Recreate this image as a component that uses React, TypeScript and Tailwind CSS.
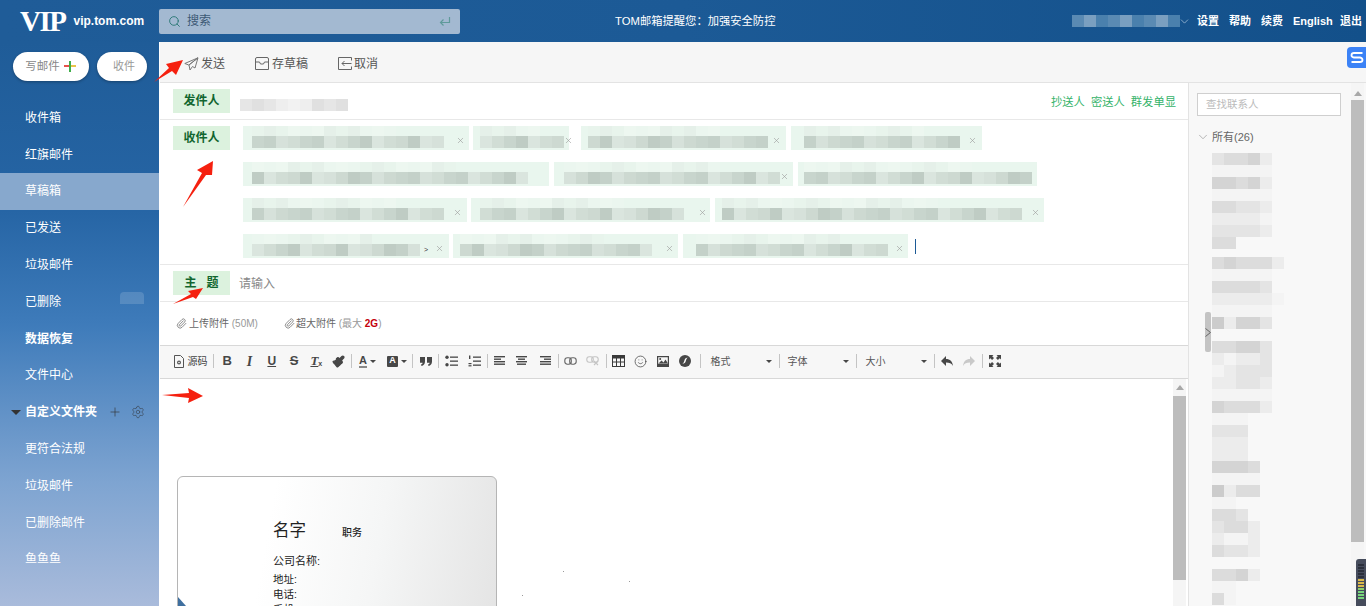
import React from "react"
import { ChevronDown, Plus, Search, Settings, Paperclip, Smile, Paintbrush, X } from "lucide-react"

const navTop = ["收件箱", "红旗邮件", "草稿箱", "已发送", "垃圾邮件", "已删除", "数据恢复", "文件中心"]
const navBottom = ["更符合法规", "垃圾邮件", "已删除邮件", "鱼鱼鱼"]

const greens = ["#c8d5cd", "#d1ddd5", "#dae5de", "#bfccc4", "#cdd9d1", "#d6e1da", "#c4d1c9"]
const lights = ["#e8f4ec", "#ebf6ef", "#e5f0e9", "#edf7f0"]
const greys = ["transparent", "#f4f4f4", "#ececec", "#e4e4e4", "#dcdcdc", "#d4d4d4", "#cccccc"]

// address chips, each one is blurred out in the screenshot
type Chip = { w: number; pad: number; cells: number; close?: number; gap?: number; mark?: boolean }
const chipRows: Chip[][] = [
  [
    { w: 226, pad: 9, cells: 16, close: 4 },
    { w: 96, pad: 7, cells: 7, close: 4, gap: 4 },
    { w: 205, pad: 7, cells: 15, close: 5, gap: 12 },
    { w: 191, pad: 13, cells: 13, close: 5, gap: 5 },
  ],
  [
    { w: 306, pad: 9, cells: 23 },
    { w: 239, pad: 10, cells: 18, close: 5, gap: 5 },
    { w: 239, pad: 6, cells: 19, gap: 5 },
  ],
  [
    { w: 224, pad: 9, cells: 16, close: 5 },
    { w: 239, pad: 9, cells: 17, close: 3, gap: 4 },
    { w: 329, pad: 7, cells: 25, close: 4, gap: 5 },
  ],
  [
    { w: 206, pad: 9, cells: 14, close: 5, mark: true },
    { w: 225, pad: 7, cells: 16, close: 4, gap: 4 },
    { w: 225, pad: 13, cells: 16, close: 4, gap: 5 },
  ],
]

const contactRows = [
  "34452", "11111", "55452", "11111", "44332", "22221", "33332", "44", "-",
  "454442", "11111", "44443", "222221", "11111", "62553", "", "44553", "21223", "12333", "22332", "11111",
  "54442", "111", "333", "222", "222", "5554", "1111", "6244", "11", "443", "3442", "2112", "4332", "", "4452", "11", "41",
]

function Cells({ count, seed, palette, h }: { count: number; seed: number; palette: string[]; h: string }) {
  return (
    <div className="flex">
      {Array.from({ length: count }).map((_, i) => (
        <div key={i} className={`w-3 ${h}`} style={{ background: palette[(i * 5 + seed + (i % 3)) % palette.length] }} />
      ))}
    </div>
  )
}

function AddressChip({ chip, seed }: { chip: Chip; seed: number }) {
  return (
    <div
      className="flex h-6 shrink-0 items-end bg-[#e9f6ee] pb-[2px]"
      style={{ width: chip.w, marginLeft: chip.gap ?? 0, paddingLeft: chip.pad }}
    >
      <div className="flex flex-col">
        <Cells count={Math.ceil(chip.cells * 0.7)} seed={seed} palette={lights} h="h-[10px]" />
        <Cells count={chip.cells} seed={seed} palette={greens} h="h-3" />
      </div>
      {chip.mark && <span className="mb-[2px] ml-[4px] text-[7px] leading-[9px] text-[#333]">&gt;</span>}
      {chip.close !== undefined && (
        <span className="mb-[3px] ml-auto" style={{ marginRight: chip.close }}>
          <X size={9} strokeWidth={1.6} className="text-[#9a9a9a]" />
        </span>
      )}
    </div>
  )
}

function FieldLabel({ children }: { children: React.ReactNode }) {
  return (
    <div className="flex h-6 w-[57px] shrink-0 items-center justify-center bg-[#dcf2de] text-[12px] font-bold text-[#11662f]">
      {children}
    </div>
  )
}

function Sep({ className = "" }: { className?: string }) {
  return <div className={`h-[14px] w-px shrink-0 bg-[#c4c4c4] ${className}`} />
}

function Tool({ children, w = "w-[22.3px]" }: { children: React.ReactNode; w?: string }) {
  return <div className={`flex h-5 shrink-0 items-center justify-center text-[#474747] ${w}`}>{children}</div>
}

function Caret() {
  return <div className="ml-[3px] h-0 w-0 border-x-[3px] border-t-[3px] border-x-transparent border-t-[#474747]" />
}

function Lines({ rows }: { rows: [number, number][] }) {
  return (
    <svg width="12" height="12" viewBox="0 0 12 12" fill="#474747">
      {rows.map(([x, w], i) => (
        <rect key={i} x={x} y={1 + i * 2.5} width={w} height="1.4" />
      ))}
    </svg>
  )
}

function ListIcon({ numbered }: { numbered?: boolean }) {
  return (
    <svg width="13" height="12" viewBox="0 0 13 12" fill="#474747">
      <rect x="5" y="1.5" width="8" height="1.3" />
      <rect x="5" y="5.5" width="8" height="1.3" />
      <rect x="5" y="9.5" width="8" height="1.3" />
      {numbered ? (
        <>
          <rect x="1" y="0.5" width="1.4" height="3.5" />
          <rect x="0.5" y="8" width="3" height="1.2" />
          <rect x="0.5" y="10.2" width="3" height="1.2" />
        </>
      ) : (
        <>
          <circle cx="2" cy="2.2" r="1.7" />
          <circle cx="2" cy="9.8" r="1.7" />
        </>
      )}
    </svg>
  )
}

function SelectBox({ label, className }: { label: string; className: string }) {
  return (
    <div className={`flex h-5 shrink-0 items-center justify-between pr-[7px] text-[10px] text-[#555] ${className}`}>
      <span>{label}</span>
      <div className="h-0 w-0 border-x-[3px] border-t-[3px] border-x-transparent border-t-[#474747]" />
    </div>
  )
}

function EditorToolbar() {
  return (
    <div className="flex h-[34px] shrink-0 items-center border-y border-[#d8d8d8] bg-[#f7f7f7] pb-[2px] pl-[10px]">
      <Tool w="w-[40px]">
        <svg width="12" height="13" viewBox="0 0 12 13" fill="none" stroke="#555" strokeWidth="1">
          <path d="M1.5.5h6l3 3v9h-9z" />
          <circle cx="6" cy="7.5" r="2" fill="#555" stroke="none" />
          <circle cx="6" cy="7.5" r="0.8" fill="#fff" stroke="none" />
        </svg>
        <span className="ml-[3px] text-[10px] text-[#444]">源码</span>
      </Tool>
      <Sep className="ml-[3px] mr-[2px]" />
      <Tool><span className="font-['Liberation_Sans'] text-[13px] font-bold">B</span></Tool>
      <Tool><span className="font-['Liberation_Serif'] text-[14px] font-bold italic">I</span></Tool>
      <Tool><span className="font-['Liberation_Sans'] text-[12px] font-bold underline">U</span></Tool>
      <Tool><span className="font-['Liberation_Sans'] text-[13px] font-bold line-through">S</span></Tool>
      <Tool>
        <span className="font-['Liberation_Serif'] text-[13px] font-bold italic underline">T</span>
        <span className="mt-[5px] text-[7px] font-bold leading-none">x</span>
      </Tool>
      <Tool><Paintbrush size={13} strokeWidth={2.4} fill="#474747" /></Tool>
      <Sep className="ml-[1px] mr-[1px]" />
      <Tool w="w-[29.5px]">
        <span className="border-b-2 border-[#888] font-['Liberation_Sans'] text-[11px] font-bold leading-[11px]">A</span>
        <Caret />
      </Tool>
      <Tool w="w-[29.5px]">
        <span className="flex h-[11px] w-[11px] items-center justify-center rounded-[1px] bg-[#474747] font-['Liberation_Sans'] text-[9px] font-bold text-white">A</span>
        <Caret />
      </Tool>
      <Sep className="mx-[0.5px]" />
      <Tool w="w-[24px]">
        <svg width="12" height="9" viewBox="0 0 12 9" fill="#474747">
          <path d="M0 0h5v4.5C5 7 3.5 8.5 1.5 9L1 7.6c1-.3 1.5-1 1.6-1.9H0zM7 0h5v4.5C12 7 10.5 8.5 8.5 9L8 7.6c1-.3 1.5-1 1.6-1.9H7z" />
        </svg>
      </Tool>
      <Sep className="mx-[0.5px]" />
      <div className="w-px shrink-0" />
      <Tool><ListIcon /></Tool>
      <Tool><ListIcon numbered /></Tool>
      <Sep className="ml-[2px] mr-[0.5px]" />
      <Tool><Lines rows={[[0, 11], [0, 7], [0, 11], [0, 11]]} /></Tool>
      <Tool><Lines rows={[[0, 11], [2, 7], [0, 11], [1, 9]]} /></Tool>
      <Tool><Lines rows={[[1, 11], [5, 7], [1, 11], [1, 11]]} /></Tool>
      <Sep className="ml-[2px] mr-[0.5px]" />
      <Tool>
        <svg width="13" height="8" viewBox="0 0 13 8" fill="none" stroke="#666" strokeWidth="1.1">
          <rect x="0.8" y="0.8" width="6.5" height="6.4" rx="2.6" />
          <rect x="5.7" y="0.8" width="6.5" height="6.4" rx="2.6" />
        </svg>
      </Tool>
      <Tool>
        <svg width="13" height="10" viewBox="0 0 13 10" fill="none" stroke="#c4c4c4" strokeWidth="1.1">
          <rect x="0.8" y="0.8" width="6.5" height="5.4" rx="2.4" />
          <rect x="5.7" y="0.8" width="6.5" height="5.4" rx="2.4" />
          <path d="M8 5l4 4M12 5L8 9" />
        </svg>
      </Tool>
      <Sep className="ml-[2px] mr-[0.5px]" />
      <Tool>
        <svg width="13" height="12" viewBox="0 0 13 12" fill="none" stroke="#3a3a3a" strokeWidth="1">
          <rect x="0.5" y="0.5" width="12" height="11" />
          <rect x="0.5" y="0.5" width="12" height="2.5" fill="#3a3a3a" />
          <path d="M4.5 3v8.5M8.5 3v8.5M.5 7h12" />
        </svg>
      </Tool>
      <Tool><Smile size={13} strokeWidth={1.4} /></Tool>
      <Tool>
        <svg width="12" height="11" viewBox="0 0 12 11" fill="#474747">
          <path fillRule="evenodd" d="M0 0h12v11H0zM1.2 1.2v6.6h9.6V1.2z" />
          <path d="M1.5 7.5l3-3 2 2 2-3 2.5 4z" />
          <circle cx="3.2" cy="3" r="1" />
        </svg>
      </Tool>
      <Tool>
        <svg width="12" height="12" viewBox="0 0 12 12">
          <circle cx="6" cy="6" r="6" fill="#474747" />
          <path d="M8.7 2.6C6.5 3 5.8 4.2 5.4 5.5 5 7 4.5 8 3.3 8.8 5.4 8.8 6.3 7.5 6.7 6.2 7.1 5 7.5 3.6 8.7 2.6z" fill="#fff" />
        </svg>
      </Tool>
      <Sep className="ml-[3px]" />
      <SelectBox label="格式" className="w-[78px] pl-[10px]" />
      <Sep className="mr-[1px]" />
      <SelectBox label="字体" className="w-[75px] pl-[7px]" />
      <Sep className="mr-[1px]" />
      <SelectBox label="大小" className="w-[76px] pl-[8px]" />
      <Sep className="mr-[1px]" />
      <Tool>
        <svg width="12" height="10" viewBox="0 0 12 10" fill="#474747"><path d="M5 0v3c4 0 6.5 2.5 7 7-1.500-2.500-3.500-3.400-7-3.400V10L0 5z" /></svg>
      </Tool>
      <Tool>
        <svg width="12" height="10" viewBox="0 0 12 10" fill="#c9c9c9"><path d="M7 0v3C3 3 .5 5.500 0 10c1.500-2.500 3.500-3.400 7-3.400V10l5-5z" /></svg>
      </Tool>
      <Sep className="ml-[2px] mr-[1px]" />
      <Tool>
        <svg width="12" height="12" viewBox="0 0 12 12" fill="#474747">
          <path d="M0 0h4.500L3.200 1.300 5 3.100 3.100 5 1.300 3.200 0 4.500zM12 0v4.500l-1.300-1.300L8.900 5 7 3.100l1.800-1.800L7.500 0zM0 12V7.500l1.300 1.300L3.100 7 5 8.900l-1.800 1.800L4.500 12zM12 12H7.500l1.300-1.300L7 8.900 8.900 7l1.800 1.800L12 7.500z" />
        </svg>
      </Tool>
    </div>
  )
}

function Scrollbar({ className, thumb, top }: { className: string; thumb: string; top: string }) {
  return (
    <div className={`flex w-[13px] shrink-0 flex-col items-center bg-[#f5f5f5] ${className}`}>
      <div className={`h-0 w-0 border-x-[4px] border-b-[5px] border-x-transparent border-b-[#a8a8a8] ${top}`} />
      <div className={`w-full bg-[#bdbdbd] ${thumb}`} />
    </div>
  )
}

export default function App() {
  return (
    <div className="relative flex h-[606px] w-[1366px] flex-col overflow-hidden bg-white font-['Liberation_Sans','Noto_Sans_CJK_SC',sans-serif] text-[12px]">
      <header className="flex h-[42px] shrink-0 items-center bg-[linear-gradient(90deg,#1f5c98_0%,#1c5a96_50%,#13508a_100%)] text-white">
        <div className="flex w-[159px] shrink-0 items-center pl-[20px]">
          <span className="font-['Liberation_Serif'] text-[29px] font-bold leading-none tracking-[-1.5px]">VIP</span>
          <span className="ml-[8px] text-[12px] font-bold">vip.tom.com</span>
        </div>
        <div className="flex h-[25px] w-[301px] shrink-0 items-center justify-between rounded-[2px] bg-[#a3b9d1] px-[9px]">
          <div className="flex items-center gap-[6px] text-[#3d5a75]">
            <Search size={13} strokeWidth={1.8} className="text-[#2f7a78]" />
            <span>搜索</span>
          </div>
          <svg width="12" height="11" viewBox="0 0 12 11" fill="none" stroke="#5f9a9a" strokeWidth="1.2">
            <path d="M10.5 1v5.5H1.5M4.5 3.5l-3 3 3 3" />
          </svg>
        </div>
        <span className="ml-[155px] w-[290px] shrink-0 text-[11.3px]">TOM邮箱提醒您：加强安全防控</span>
        <div className="ml-[167px] flex h-[12px] shrink-0 items-center">
          <Cells count={9} seed={2} palette={["#2b6a9e", "#3d78aa", "#5a8ab3", "#7a9fc0", "#4a80ad"]} h="h-[12px]" />
          <ChevronDown size={13} strokeWidth={1.4} className="ml-[-2px] text-[#a9c2da]" />
        </div>
        <nav className="ml-[6px] flex text-[11px] font-bold">
          <span className="w-[32px]">设置</span>
          <span className="w-[32px]">帮助</span>
          <span className="w-[32px]">续费</span>
          <span className="w-[47px]">English</span>
          <span>退出</span>
        </nav>
      </header>

      <div className="flex min-h-0 flex-1">
        <aside className="relative w-[159px] shrink-0 bg-[linear-gradient(180deg,#1f5c98_0%,#2665a5_30%,#3e7bba_50%,#7ea4d1_78%,#a9bbdb_100%)] text-[12px] text-white">
          <div className="flex gap-[8px] pl-[13px] pt-[10px]">
            <div className="flex h-[29px] w-[76px] items-center justify-center rounded-full bg-white pr-[1px] text-[11.5px] text-[#888] shadow-[0_1px_3px_rgba(0,0,0,0.3)]">
              写邮件
              <span className="relative ml-[4px] h-[11px] w-[12px]">
                <span className="absolute left-0 top-[4px] h-[2px] w-[6px] bg-[#e8524a]" />
                <span className="absolute right-0 top-[4px] h-[2px] w-[6px] bg-[#e9c349]" />
                <span className="absolute left-[5px] top-0 h-[11px] w-[2px] bg-[#3fae49]" />
              </span>
            </div>
            <div className="flex h-[29px] w-[50px] items-center justify-center rounded-full bg-white pl-[4px] text-[11px] text-[#999] shadow-[0_1px_3px_rgba(0,0,0,0.3)]">
              收件
            </div>
          </div>
          <ul className="pt-[18.5px]">
            {navTop.map((item) => (
              <li
                key={item}
                className={`flex h-[36.8px] items-center pl-[25px] ${item === "草稿箱" ? "bg-[#87a8cd]" : ""} ${item === "数据恢复" ? "font-bold" : ""}`}
              >
                {item}
              </li>
            ))}
            <li className="flex h-[36.8px] items-center pl-[11px] font-bold">
              <div className="mr-[4px] h-0 w-0 border-x-[5px] border-t-[5px] border-x-transparent border-t-[#333]" />
              自定义文件夹
              <Plus size={14} strokeWidth={1.1} className="ml-[11px] text-[#333]" />
              <Settings size={14} strokeWidth={1.2} className="ml-[9px] text-[#3c4a5c]" />
            </li>
            {navBottom.map((item) => (
              <li key={item} className="flex h-[36.8px] items-center pl-[25px]">
                {item}
              </li>
            ))}
          </ul>
          <div className="absolute left-[120px] top-[250px] h-[12px] w-[24px] rounded-t-[4px] bg-white/15" />
        </aside>

        <main className="ml-px flex min-w-0 flex-1 flex-col">
          <div className="flex h-[41px] shrink-0 items-center border-b border-[#e3e3e3] bg-[#f6f6f6] pl-[24px] pt-[3px] text-[12px] text-[#555]">
            <svg width="15" height="14" viewBox="0 0 15 14" fill="none" stroke="#777" strokeWidth="1">
              <path d="M14 .8L.8 6.5l4 1.5zM14 .8L5 8l1 5 2.5-3.500 2.500 1.500z" />
            </svg>
            <span className="ml-[2px]">发送</span>
            <svg className="ml-[30px]" width="14" height="13" viewBox="0 0 14 13" fill="none" stroke="#666" strokeWidth="1">
              <path d="M.5 5V2q0-1.500 1.500-1.500h10q1.500 0 1.500 1.500v3M.5 5v7.500h13V5H9.500L8.500 7h-3l-1-2z" />
            </svg>
            <span className="ml-[3px]">存草稿</span>
            <svg className="ml-[30px]" width="14" height="13" viewBox="0 0 14 13" fill="none" stroke="#666" strokeWidth="1">
              <path d="M13.5 3.500v-3H.5v12h13v-3M13.500 6.500H4M6.500 4L4 6.500 6.500 9" />
            </svg>
            <span className="ml-[2px]">取消</span>
          </div>

          <div className="flex min-h-0 flex-1">
            <div className="flex w-[1029px] shrink-0 flex-col border-r border-[#e3e3e3]">
              <div className="flex h-[37px] shrink-0 items-center border-b border-[#e8e8e8] pl-[13px] pr-[12px]">
                <FieldLabel>发件人</FieldLabel>
                <div className="ml-[10px] mt-[8px] flex">
                  <Cells count={9} seed={1} palette={["#eeeeee", "#e6e6e6", "#f2f2f2", "#e0e0e0"]} h="h-3" />
                </div>
                <div className="ml-auto mt-[2px] flex gap-[6px] text-[11.3px] text-[#35b36a]">
                  <span>抄送人</span>
                  <span>密送人</span>
                  <span>群发单显</span>
                </div>
              </div>

              <div className="relative flex h-[145px] shrink-0 border-b border-[#e8e8e8] pl-[13px] pt-[6px]">
                <FieldLabel>收件人</FieldLabel>
                <div className="ml-[13px] flex flex-col gap-3">
                  {chipRows.map((row, r) => (
                    <div key={r} className="flex items-center">
                      {row.map((chip, i) => (
                        <AddressChip key={i} chip={chip} seed={r * 3 + i * 2} />
                      ))}
                      {r === 3 && <div className="ml-[7px] h-[15px] w-px bg-[#1c5a96]" />}
                    </div>
                  ))}
                </div>
              </div>

              <div className="flex h-[37px] shrink-0 items-center border-b border-[#e8e8e8] pl-[13px]">
                <div className="flex h-6 w-[57px] items-center justify-center gap-[10px] bg-[#dcf2de] font-bold text-[#11662f]">
                  <span>主</span>
                  <span>题</span>
                </div>
                <span className="ml-[9px] mt-[2px] text-[#888]">请输入</span>
              </div>

              <div className="flex h-[43px] shrink-0 items-center pl-[16px] text-[10px] text-[#666]">
                <Paperclip size={11} strokeWidth={1.6} className="text-[#666]" />
                <span className="ml-[2px]">上传附件 <span className="text-[#999]">(50M)</span></span>
                <Paperclip size={11} strokeWidth={1.6} className="ml-[26px] text-[#666]" />
                <span className="ml-px">
                  超大附件 <span className="text-[#999]">(最大 <b className="text-[#c4000b]">2G</b>)</span>
                </span>
              </div>

              <EditorToolbar />

              <div className="flex min-h-0 flex-1 overflow-hidden">
                <div className="min-w-0 flex-1 pl-[17px] pt-[97px]">
                  <div className="relative h-[200px] w-[320px] overflow-hidden rounded-[6px] border border-[#b5b5b5] bg-[linear-gradient(100deg,#ffffff_28%,#f5f6f6_60%,#e3e3e3_100%)] pl-[95px] pt-[42px] text-[#222]">
                    <div className="absolute left-[6px] top-[4px] h-[24px] w-[14px] rounded-full bg-white" />
                    <svg className="absolute left-0 top-[120px]" width="8" height="9" viewBox="0 0 8 9" fill="#3f6f9f">
                      <polygon points="0,0 8,9 0,9" />
                    </svg>
                    <div className="flex items-end">
                      <span className="text-[16.5px] leading-[22px]">名字</span>
                      <span className="mb-[1px] ml-[36px] text-[10px] font-medium">职务</span>
                    </div>
                    <p className="mt-[12px] text-[11px] leading-[16px]">公司名称:</p>
                    <p className="mt-[3px] text-[10.5px] leading-[15px]">地址:</p>
                    <p className="text-[10.5px] leading-[15px]">电话:</p>
                    <p className="text-[10.5px] leading-[15px]">手机:</p>
                  </div>
                </div>
                <Scrollbar className="mr-[2px] pt-[6px]" top="mb-[6px]" thumb="h-[184px]" />
              </div>
            </div>

            <aside className="relative min-w-0 flex-1 bg-[#f8f8f8]">
              <div className="flex h-full">
                <div className="w-[162px] shrink-0 pl-[8px] pt-[10px]">
                  <div className="flex h-[23px] w-[144px] items-center border border-[#cfcfcf] bg-white pl-[8px] text-[10.5px] text-[#bbb]">
                    查找联系人
                  </div>
                  <div className="mt-[13px] flex items-center text-[11px] text-[#666]">
                    <ChevronDown size={14} strokeWidth={1.2} className="ml-[-1px] text-[#999]" />
                    <span className="ml-[2px]">所有(26)</span>
                  </div>
                  <div className="ml-[15px] mt-[7px] flex flex-col">
                    {contactRows.map((row, i) =>
                      row === "-" ? (
                        <div key={i} className="h-2" />
                      ) : (
                        <div key={i} className="flex h-3">
                          {row.split("").map((c, j) => (
                            <div key={j} className="w-3" style={{ background: greys[Number(c)] }} />
                          ))}
                        </div>
                      )
                    )}
                  </div>
                </div>
                <Scrollbar className="pt-[8px]" top="mb-[4px]" thumb="h-[442px]" />
              </div>
              <div className="absolute left-[16px] top-[229px] flex h-[40px] w-[6px] items-center rounded-[2px] bg-[#c4c4c4] text-[#666]">
                <svg width="6" height="9" viewBox="0 0 6 9" fill="none" stroke="#666" strokeWidth="1"><path d="M.5.5l5 4-5 4" /></svg>
              </div>
            </aside>
          </div>
        </main>
      </div>

      {/* floating widgets and the red annotation arrows sit over the page */}
      <div className="absolute left-[1347px] top-[47px] flex h-[21px] w-[19px] items-center justify-center rounded-l-[4px] bg-[#3b82f6]">
        <svg width="14" height="13" viewBox="0 0 14 13" fill="none" stroke="#fff" strokeWidth="1.8">
          <path d="M12.5 2H4Q1.500 2 1.500 4.200 1.500 6 4 6.500h6Q12.500 7 12.500 9 12.500 11 10 11H1.500" />
        </svg>
      </div>
      <div className="absolute left-[1356px] top-[559px] flex h-[47px] w-[10px] flex-col gap-px rounded-tl-[3px] bg-[#464c5c] pl-[2px] pt-[5px]">
        {["#2b303c", "#2b303c", "#2b303c", "#2b303c", "#2b303c", "#d9b84a", "#d9b84a", "#d9b84a", "#8fcf6a", "#78d67c", "#78d67c", "#78d67c"].map((c, i) => (
          <div key={i} className="h-[2px] w-[6px]" style={{ background: c }} />
        ))}
      </div>
      <svg className="pointer-events-none absolute left-0 top-0" width="1366" height="606" fill="#f5200f">
        <polygon points="183,60 176,75 172,71 154,82 169,68 166,64" />
        <polygon points="213,161 197,170 202,173 183,207 206,175 212,175" />
        <polygon points="203,288 188,291 191,294 173,304 193,297 196,299" />
        <polygon points="162,395 189,393 188,388 203,396 188,403 189,398" />
        <rect x="563" y="571" width="1" height="1" fill="#999" />
        <rect x="629" y="581" width="1" height="1" fill="#999" />
        <rect x="522" y="595" width="1" height="1" fill="#999" />
      </svg>
    </div>
  )
}
